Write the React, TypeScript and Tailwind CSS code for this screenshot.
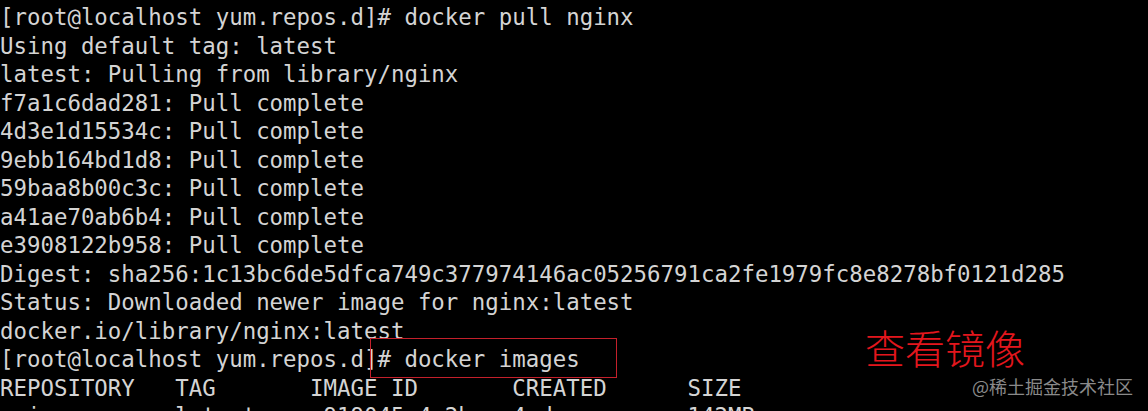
const lines = [
  '[root@localhost yum.repos.d]# docker pull nginx',
  'Using default tag: latest',
  'latest: Pulling from library/nginx',
  'f7a1c6dad281: Pull complete',
  '4d3e1d15534c: Pull complete',
  '9ebb164bd1d8: Pull complete',
  '59baa8b00c3c: Pull complete',
  'a41ae70ab6b4: Pull complete',
  'e3908122b958: Pull complete',
  'Digest: sha256:1c13bc6de5dfca749c377974146ac05256791ca2fe1979fc8e8278bf0121d285',
  'Status: Downloaded newer image for nginx:latest',
  'docker.io/library/nginx:latest',
  '[root@localhost yum.repos.d]# docker images',
  'REPOSITORY   TAG       IMAGE ID       CREATED      SIZE',
  'nginx        latest    c919045c4c2b   4 days ago   142MB',
];

export default function App() {
  return (
    <div className="relative w-[1148px] h-[411px] overflow-hidden bg-black">
      <pre className="m-0 pt-[3px] pl-0 font-['DejaVu_Sans_Mono',monospace] text-[22.4px] leading-[28.5px] text-[#d4d4d4] whitespace-pre">
        {lines.map((l, i) => (
          <div key={i}>{l}</div>
        ))}
      </pre>

      {/* highlight box round the command */}
      <div className="absolute left-[370px] top-[338px] w-[247px] h-[40px] border-[1.5px] border-[#c4202b]"></div>

      <div className="absolute left-[865px] top-[323px] font-['Noto_Sans_CJK_SC',sans-serif] font-light text-[40px] leading-[48px] text-[#e3161d]">
        查看镜像
      </div>

      <div className="absolute left-[972px] top-[374px] font-['Noto_Sans_CJK_SC',sans-serif] text-[18px] leading-[24px] text-[#8a8a8a]">
        @稀土掘金技术社区
      </div>
    </div>
  );
}
